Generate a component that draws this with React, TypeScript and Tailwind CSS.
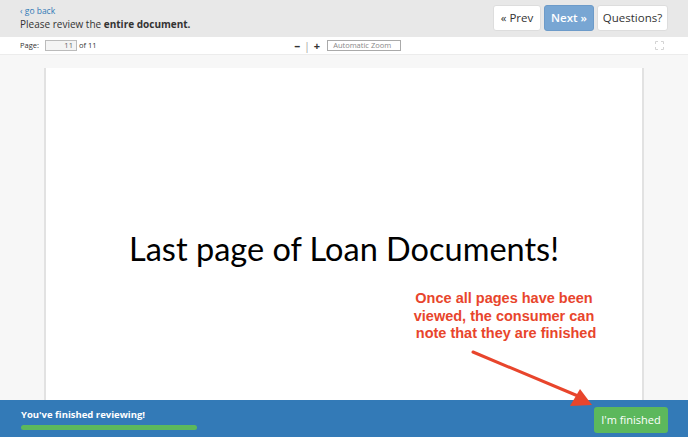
import React from 'react';

const ui = { fontFamily: '"Open Sans", "Liberation Sans", sans-serif' };

const ExpandIcon: React.FC = () => (
  <svg width="9" height="9" viewBox="0 0 9 9" fill="none" stroke="#d4d4d4" strokeWidth="1">
    <path d="M0.5 3V0.5H3M6 0.5H8.5V3M8.5 6V8.5H6M3 8.5H0.5V6" />
  </svg>
);

export default function App() {
  return (
    <div className="relative w-full h-[437px] flex flex-col overflow-hidden bg-[#f7f7f7]" style={ui}>
      {/* header */}
      <div className="h-[37px] bg-[#e8e8e8] flex justify-between pl-[20px] pr-[20px] shrink-0">
        <div className="flex flex-col pt-[5px]">
          <a className="text-[8.5px] leading-[12px] text-[#337ab7]">‹ go back</a>
          <div className="text-[10px] leading-[14px] text-[#333]">
            Please review the <span className="font-bold">entire document.</span>
          </div>
        </div>
        <div className="flex gap-[3px] pt-[5px]">
          <button className="h-[26px] w-[48px] bg-white border border-[#ddd] rounded-[3px] text-[11.5px] text-[#333]">« Prev</button>
          <button className="h-[26px] w-[50px] bg-[#78a6d3] border border-[#6d9bc9] rounded-[3px] text-[11.5px] font-semibold text-white">Next »</button>
          <button className="h-[26px] w-[71px] bg-white border border-[#ddd] rounded-[3px] text-[11.5px] text-[#333]">Questions?</button>
        </div>
      </div>

      {/* viewer toolbar */}
      <div className="h-[18px] bg-white border-b border-[#ececec] flex items-center pl-[20px] pr-[24px] text-[7.5px] text-[#333] shrink-0">
        <span>Page:</span>
        <div className="ml-[6px] w-[32px] h-[11px] border border-[#bbb] bg-[#f4f4f4] text-right pr-[3px] leading-[9px] text-[#666]">11</div>
        <span className="ml-[2px]">of 11</span>
        <div className="flex-1 flex justify-center items-center pl-[42px]">
          <span className="text-[12px] font-bold leading-none">–</span>
          <span className="mx-[4px] text-[10px] text-[#999] leading-none">|</span>
          <span className="text-[11px] font-bold leading-none">+</span>
          <div className="ml-[7px] w-[74px] h-[11px] border border-[#aaa] text-[#888] pl-[5px] leading-[9px]">Automatic Zoom</div>
        </div>
        <div className="w-[107px] flex justify-end">
          <ExpandIcon />
        </div>
      </div>

      {/* document area */}
      <div className="flex-1 pt-[13px] px-[44px] min-h-0">
        <div className="bg-white h-full border-l-2 border-r-2 border-[#e2e2e2] flex justify-center pt-[161px]">
          <div className="text-[32.5px] leading-[40px] text-black" style={{ fontFamily: 'Lato, "Open Sans", sans-serif' }}>
            Last page of Loan Documents!
          </div>
        </div>
      </div>

      {/* footer */}
      <div className="h-[37px] bg-[#337ab7] flex items-center justify-between pl-[21px] pr-[20px] shrink-0">
        <div className="flex flex-col gap-[5px] pt-[1px]">
          <div className="text-[9.5px] leading-[11px] font-bold text-white">You've finished reviewing!</div>
          <div className="w-[176px] h-[5px] rounded-full bg-[#5cb85c]" />
        </div>
        <button className="h-[26px] w-[74px] mt-[3px] bg-[#5cb85c] rounded-[3px] text-[11px] text-white">I'm finished</button>
      </div>

      {/* annotation */}
      <div
        className="absolute left-[394px] top-[290px] w-[220px] text-center text-[14.5px] leading-[17.5px] font-bold text-[#e8452c]"
        style={{ fontFamily: '"Liberation Sans", Arial, sans-serif' }}
      >
        Once all pages have been<br />viewed, the consumer can<br />&nbsp;note that they are finished
      </div>
      <svg className="absolute left-0 top-0" width="688" height="437" viewBox="0 0 688 437">
        <line x1="473" y1="352" x2="578" y2="396" stroke="#e8452c" strokeWidth="3" strokeLinecap="round" />
        <polygon points="592,405 570,406 580,389" fill="#e8452c" />
      </svg>
    </div>
  );
}
